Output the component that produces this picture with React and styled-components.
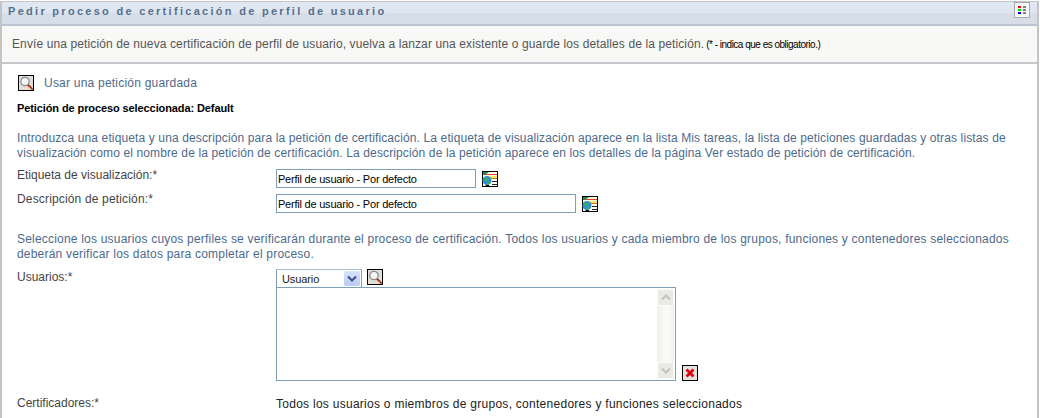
import React from "react"
import styled, { createGlobalStyle } from "styled-components"

const GlobalStyle = createGlobalStyle`
  html, body {
    margin: 0;
    padding: 0;
    background: #fff;
    overflow: hidden;
  }
  body {
    font-family: "Liberation Sans", Arial, sans-serif;
    font-size: 12px;
  }
`

const Portlet = styled.div`
  width: 1040px;
  height: 418px;
  box-sizing: border-box;
  padding-top: 1px;
  overflow: hidden;
`

const Frame = styled.div`
  border: 1px solid #c4c4c6;
  border-left-width: 2px;
  border-right-width: 2px;
  border-bottom: none;
  margin-right: 1px;
  height: 417px;
  box-sizing: border-box;
`

const TitleBar = styled.div`
  height: 24px;
  box-sizing: border-box;
  border-bottom: 2px solid #bcc4cf;
  background: linear-gradient(#e0e8f1 0, #dfe6ef 48%, #d6dfe9 52%, #d5dee8 100%);
  display: flex;
  align-items: flex-start;
  justify-content: space-between;
  padding: 0 7px 0 6px;
`

const Title = styled.h1`
  margin: 3px 0 0;
  font-size: 11px;
  line-height: 13px;
  font-weight: bold;
  letter-spacing: 2.29px;
  color: #56708f;
`

const MenuButton = styled.button`
  width: 16px;
  height: 16px;
  box-sizing: border-box;
  padding: 0;
  margin: 0;
  border: 1px solid #a8a8a8;
  background: #f6f8fa;
  display: flex;
  align-items: center;
  justify-content: center;
`

const IntroBar = styled.div`
  height: 38px;
  box-sizing: border-box;
  border-bottom: 2px solid #c8c8cc;
  background: #f8f8f6;
  color: #555;
  display: flex;
  align-items: center;
  padding: 0 0 0 10px;
  white-space: nowrap;
  letter-spacing: 0.115px;
`

const Required = styled.span`
  font-size: 10px;
  letter-spacing: -0.5px;
  color: #000;
  margin-left: 2px;
`

const Content = styled.div`
  padding: 10px 0 0 15px;
`

const SavedLink = styled.a`
  display: flex;
  align-items: center;
  gap: 10px;
  height: 17px;
  color: #4d6a8c;
  padding-left: 1px;
  letter-spacing: 0.22px;
`

const Selected = styled.div`
  margin-top: 10px;
  font-weight: bold;
  color: #000;
  font-size: 11px;
  letter-spacing: -0.1px;
  line-height: 14px;
`

const Help = styled.p`
  margin: ${(p) => p.$top}px 0 0;
  width: 1010px;
  color: #4d6a8c;
  line-height: 15px;
  letter-spacing: ${(p) => p.$spacing}px;
`

const FieldRow = styled.div`
  display: grid;
  grid-template-columns: 259px 1fr;
  margin-top: ${(p) => p.$top}px;
  color: #444;
`

const Label = styled.label`
  line-height: 14px;
  margin-top: ${(p) => p.$top || 0}px;
  letter-spacing: ${(p) => p.$spacing || 0}px;
`

const InputLine = styled.div`
  display: flex;
  align-items: center;
  gap: 6px;
`

const TextInput = styled.input`
  width: ${(p) => p.$width}px;
  height: 19px;
  box-sizing: border-box;
  border: 1px solid #7f9db9;
  padding: 0 1px;
  margin: 0;
  font: 11px "Liberation Sans", Arial, sans-serif;
  letter-spacing: -0.22px;
  color: #000;
  outline: none;
`

const UserPicker = styled.div`
  display: flex;
  flex-direction: column;
`

const SelectLine = styled.div`
  display: flex;
  align-items: flex-start;
  gap: 5px;
  height: 18px;
`

const SelectBox = styled.div`
  width: 86px;
  height: 18px;
  box-sizing: border-box;
  border: 1px solid #a9bdd0;
  border-bottom: none;
  border-right-color: #7f9db9;
  border-left-color: #7f9db9;
  display: flex;
  align-items: center;
  justify-content: space-between;
  padding: 0 1px 0 5px;
  color: #222;
  font-size: 11px;
  letter-spacing: -0.1px;
`

const SelectArrow = styled.span`
  width: 16px;
  height: 15px;
  border-radius: 2px;
  background: linear-gradient(#d8e3fb, #b7caf5);
  display: flex;
  align-items: center;
  justify-content: center;
`

const ListLine = styled.div`
  display: flex;
  align-items: flex-end;
  gap: 6px;
`

const ListBox = styled.div`
  width: 400px;
  height: 94px;
  box-sizing: border-box;
  border: 1px solid #7f9db9;
  display: flex;
  justify-content: flex-end;
  padding: 1px 1px 1px 0;
`

const ScrollTrack = styled.div`
  width: 17px;
  display: flex;
  flex-direction: column;
  justify-content: space-between;
  background: linear-gradient(90deg, #f0f0ea, #fafaf8 60%, #f2f2ec);
`

const ScrollButton = styled.div`
  width: 17px;
  height: 17px;
  box-sizing: border-box;
  border: 1px solid #fbfbf9;
  border-radius: 2px;
  background: #eaeae4;
  display: flex;
  align-items: center;
  justify-content: center;
`

const Plain = styled.div`
  color: #222;
  line-height: 14px;
  margin-top: 1px;
  letter-spacing: 0.27px;
`

const IconFrame = styled.span`
  display: inline-flex;
  flex: none;
  width: 16px;
  height: 16px;
`

function MagnifierIcon() {
  return (
    <IconFrame>
      <svg width="16" height="16" viewBox="0 0 16 16">
        <rect x="0.5" y="0.5" width="15" height="15" fill="#e2dfd8" stroke="#000" />
        <circle cx="7" cy="6.5" r="4.2" fill="#f6f6f6" stroke="#8c8c8c" strokeWidth="1.3" />
        <path d="M10 10 L14.5 14.5" stroke="#a82810" strokeWidth="2" />
        <path d="M10.5 11.5 L13.5 14.5" stroke="#e8c060" strokeWidth="0.8" />
      </svg>
    </IconFrame>
  )
}

function DirectoryIcon() {
  return (
    <IconFrame>
      <svg width="16" height="16" viewBox="0 0 16 16">
        <rect x="0.5" y="0.5" width="15" height="15" fill="#fffff0" stroke="#000" />
        <path d="M1 1 H7 L3 4 H1 Z" fill="#1f8a5a" />
        <rect x="3" y="3" width="12" height="1" fill="#e84020" />
        <rect x="7" y="5" width="8" height="2" fill="#f8e860" />
        <rect x="3" y="7" width="12" height="1" fill="#e07020" />
        <circle cx="5" cy="9.5" r="4.5" fill="#2f8fc8" />
        <path d="M2 7 H6 L5 10 H3 Z M5 11 H8 L6 14 H5 Z" fill="#3fae50" />
        <path d="M3 14 H7 V15 H4 Z" fill="#000" />
        <rect x="10" y="10" width="5" height="1" fill="#222" />
        <rect x="10" y="13" width="5" height="1" fill="#222" />
      </svg>
    </IconFrame>
  )
}

function DeleteIcon() {
  return (
    <IconFrame>
      <svg width="16" height="16" viewBox="0 0 16 16">
        <rect x="0.5" y="0.5" width="15" height="15" fill="#e6e3dc" stroke="#000" />
        <path d="M4.5 4.5 L11.5 11.5 M11.5 4.5 L4.5 11.5" stroke="#e00010" strokeWidth="2.8" />
      </svg>
    </IconFrame>
  )
}

function ColumnsIcon() {
  return (
    <svg width="9" height="8" viewBox="0 0 9 8">
      <rect x="0" y="0" width="3" height="2" fill="#f00000" />
      <rect x="0" y="3" width="3" height="2" fill="#00e000" />
      <rect x="0" y="6" width="3" height="2" fill="#0000f0" />
      <rect x="5" y="0" width="3" height="2" fill="#808080" />
      <rect x="5" y="3" width="3" height="2" fill="#808080" />
      <rect x="5" y="6" width="3" height="2" fill="#808080" />
    </svg>
  )
}

function Chevron({ up, color }) {
  return (
    <svg width="10" height="7" viewBox="0 0 10 7">
      <path d={up ? "M1 5.5 L5 1.5 L9 5.5" : "M1 1.5 L5 5.5 L9 1.5"} fill="none" stroke={color} strokeWidth="2" />
    </svg>
  )
}

export default function App() {
  return (
    <Portlet>
      <GlobalStyle />
      <Frame>
        <TitleBar>
          <Title>Pedir proceso de certificación de perfil de usuario</Title>
          <MenuButton>
            <ColumnsIcon />
          </MenuButton>
        </TitleBar>
        <IntroBar>
          Envíe una petición de nueva certificación de perfil de usuario, vuelva a lanzar una existente o guarde los detalles de la petición.
          <Required>(* - indica que es obligatorio.)</Required>
        </IntroBar>
        <Content>
          <SavedLink>
            <MagnifierIcon />
            Usar una petición guardada
          </SavedLink>
          <Selected>Petición de proceso seleccionada: Default</Selected>
          <Help $top={16} $spacing={0.125}>
            Introduzca una etiqueta y una descripción para la petición de certificación. La etiqueta de visualización aparece en la lista Mis tareas, la lista de peticiones guardadas y otras listas de visualización como el nombre de la petición de certificación. La descripción de la petición aparece en los detalles de la página Ver estado de petición de certificación.
          </Help>
          <FieldRow $top={8}>
            <Label $top={-1}>Etiqueta de visualización:*</Label>
            <InputLine>
              <TextInput $width={200} defaultValue="Perfil de usuario - Por defecto" />
              <DirectoryIcon />
            </InputLine>
          </FieldRow>
          <FieldRow $top={6}>
            <Label $top={-2} $spacing={0.16}>Descripción de petición:*</Label>
            <InputLine>
              <TextInput $width={300} defaultValue="Perfil de usuario - Por defecto" />
              <DirectoryIcon />
            </InputLine>
          </FieldRow>
          <Help $top={19} $spacing={0.2}>
            Seleccione los usuarios cuyos perfiles se verificarán durante el proceso de certificación. Todos los usuarios y cada miembro de los grupos, funciones y contenedores seleccionados deberán verificar los datos para completar el proceso.
          </Help>
          <FieldRow $top={7}>
            <Label $top={1}>Usuarios:*</Label>
            <UserPicker>
              <SelectLine>
                <SelectBox>
                  Usuario
                  <SelectArrow>
                    <Chevron color="#3a4f8a" />
                  </SelectArrow>
                </SelectBox>
                <MagnifierIcon />
              </SelectLine>
              <ListLine>
                <ListBox>
                  <ScrollTrack>
                    <ScrollButton>
                      <Chevron up color="#c4c4be" />
                    </ScrollButton>
                    <ScrollButton>
                      <Chevron color="#c4c4be" />
                    </ScrollButton>
                  </ScrollTrack>
                </ListBox>
                <DeleteIcon />
              </ListLine>
            </UserPicker>
          </FieldRow>
          <FieldRow $top={15}>
            <Label>Certificadores:*</Label>
            <Plain>Todos los usuarios o miembros de grupos, contenedores y funciones seleccionados</Plain>
          </FieldRow>
        </Content>
      </Frame>
    </Portlet>
  )
}
